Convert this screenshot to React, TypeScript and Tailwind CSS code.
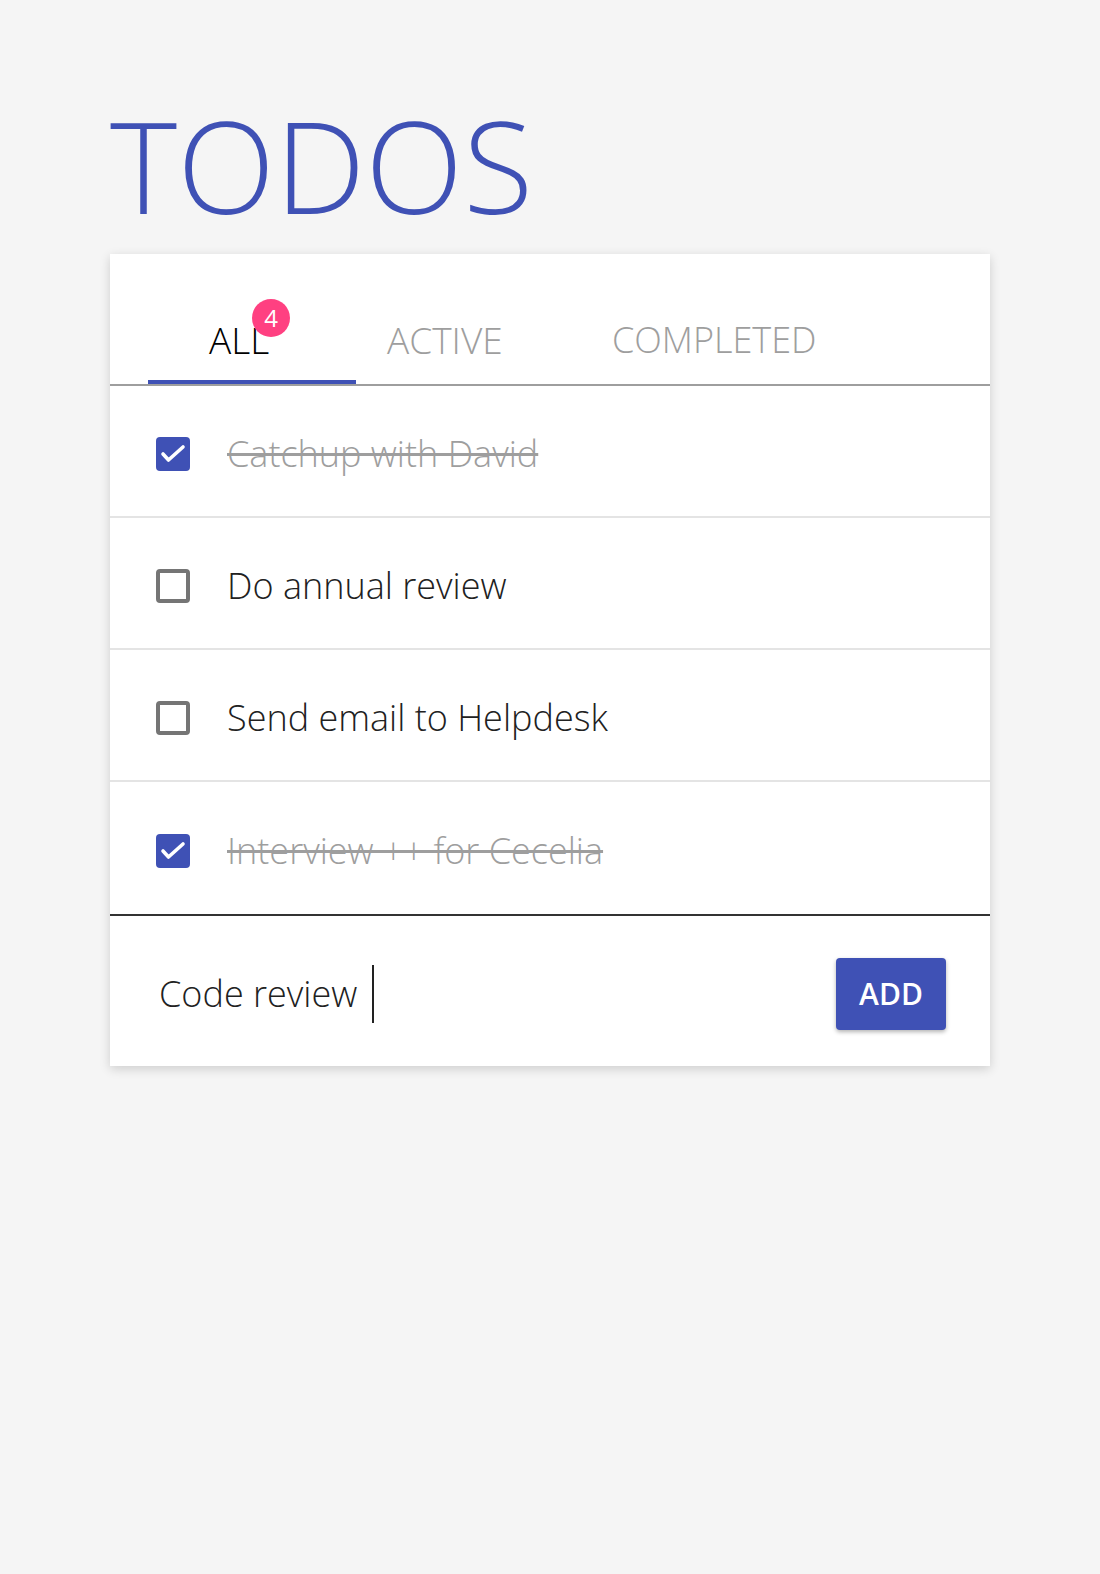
import React from "react";

const items = [
  { text: "Catchup with David", done: true },
  { text: "Do annual review", done: false },
  { text: "Send email to Helpdesk", done: false },
  { text: "Interview ++ for Cecelia", done: true },
];

function Check({ done }: { done: boolean }) {
  if (done) {
    return (
      <div className="w-[34px] h-[34px] rounded-[4px] bg-[#3f51b5] shrink-0 flex items-center justify-center">
        <svg width="34" height="34" viewBox="0 0 34 34">
          <polyline
            points="7,17 12.5,23 27,10"
            fill="none"
            stroke="white"
            strokeWidth="3.6"
            strokeLinecap="round"
            strokeLinejoin="round"
          />
        </svg>
      </div>
    );
  }
  return <div className="w-[34px] h-[34px] rounded-[4px] border-[4px] border-[#757575] shrink-0" />;
}

export default function App() {
  return (
    <div
      className="min-h-[1574px] bg-[#f5f5f5] pt-[101px] px-[110px]"
      style={{ fontFamily: '"Open Sans", "Noto Sans", sans-serif' }}
    >
      <h1 className="text-[128px] leading-none font-light text-[#3f51b5] mb-[25px]">TODOS</h1>

      <div className="bg-white shadow-[0_3px_10px_rgba(0,0,0,0.16)] h-[812px] flex flex-col">
        {/* Tabs */}
        <div className="h-[132px] border-b-2 border-[#9e9e9e] flex pl-[38px] shrink-0">
          <div className="relative w-[208px] h-full flex items-end pb-[26px] pl-[61px]">
            <span className="relative text-[37px] leading-none font-light text-black">
              ALL
              <span className="absolute left-[43px] top-[-22px] w-[38px] h-[38px] rounded-full bg-[#ff4081] text-white text-[24px] font-normal leading-none flex items-center justify-center">
                4
              </span>
            </span>
            <div className="absolute left-0 right-0 bottom-0 h-[4px] bg-[#3f51b5]" />
          </div>
          <div className="w-[256px] h-full flex items-end pb-[26px] pl-[31px]">
            <span className="text-[37px] leading-none font-light text-[#9e9e9e]">ACTIVE</span>
          </div>
          <div className="h-full flex items-end pb-[26px]">
            <span className="text-[36px] leading-none font-light text-[#9e9e9e]">COMPLETED</span>
          </div>
        </div>

        {/* Items */}
        {items.map((it, i) => (
          <div
            key={i}
            className={
              "shrink-0 flex items-center pl-[46px] pt-[6px] " +
              (i === items.length - 1
                ? "h-[134px] border-b-2 border-[#333333]"
                : "h-[132px] border-b-2 border-[#e4e4e4]")
            }
          >
            <Check done={it.done} />
            <span
              className={
                "ml-[37px] text-[36px] leading-none font-light " +
                (it.done ? "text-[#9e9e9e] line-through decoration-[#9e9e9e]" : "text-[#212121]")
              }
            >
              {it.text}
            </span>
          </div>
        ))}

        {/* Input */}
        <div className="flex-1 flex items-center pl-[49px] pr-[44px] pt-[6px]">
          <div className="flex-1 flex items-center">
            <span className="text-[36px] leading-none font-light text-[#212121]">Code review</span>
            <span className="ml-[15px] w-[2px] h-[58px] bg-[#222222]" />
          </div>
          <button className="w-[110px] h-[72px] rounded-[4px] bg-[#3f51b5] text-white text-[30px] font-semibold leading-none shadow-[0_2px_4px_rgba(0,0,0,0.3)]">
            ADD
          </button>
        </div>
      </div>
    </div>
  );
}
